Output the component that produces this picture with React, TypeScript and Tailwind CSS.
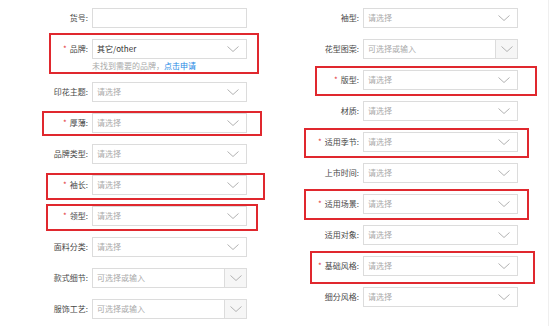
import React from 'react'

type FieldProps = {
  label: string
  required?: boolean
  placeholder?: string
  value?: string
  combo?: boolean
  empty?: boolean
  hint?: boolean
}

const Chevron = () => (
  <svg width="12" height="7" viewBox="0 0 12 7" fill="none">
    <polyline points="0.5,0.5 6,5.5 11.5,0.5" stroke="#b3b3b3" strokeWidth="1" />
  </svg>
)

const Field = ({ label, required, placeholder = '请选择', value, combo, empty, hint }: FieldProps) => {
  return (
    <div className="mb-[11px]">
      <div className="flex items-center">
        <div className="w-[88px] shrink-0 text-right text-[8px] leading-[20px] text-[#484848] whitespace-nowrap">
          {required && <span className="text-[#e4393c] mr-[3px]">*</span>}
          {label}:
        </div>
        <div className="ml-[4px] flex h-[20px] w-[155px] items-center border border-[#dcdcdc] bg-white">
          {empty ? null : (
            <>
              <span
                className={`flex-1 pl-[4px] text-[8px] leading-[18px] ${value ? 'text-[#333]' : 'text-[#aaa]'}`}
              >
                {value ?? placeholder}
              </span>
              {combo ? (
                <span className="flex h-full w-[22px] items-center justify-center border-l border-[#dcdcdc] bg-[#f6f6f6]">
                  <Chevron />
                </span>
              ) : (
                <span className="flex items-center pr-[7px]">
                  <Chevron />
                </span>
              )}
            </>
          )}
        </div>
      </div>
      {hint && (
        <div className="ml-[92px] mt-[2px] text-[8px] leading-[10px] text-[#aaa] whitespace-nowrap">
          未找到需要的品牌，<span className="text-[#1e88e5]">点击申请</span>
        </div>
      )}
    </div>
  )
}

const Mark = ({ className }: { className: string }) => (
  <div className={`pointer-events-none absolute border-2 border-[#e0282e] ${className}`} />
)

export default function App() {
  return (
    <div
      className="relative h-[326px] w-[554px] overflow-hidden bg-white"
      style={{ fontFamily: '"Noto Sans CJK SC", "Noto Sans", sans-serif' }}
    >
      <div className="flex h-full w-[549px] gap-[24px] border-r border-[#efefef]">
        <div className="flex flex-col pt-[8px]">
          <Field label="货号" empty />
          <Field label="品牌" required value="其它/other" hint />
          <Field label="印花主题" />
          <Field label="厚薄" required />
          <Field label="品牌类型" />
          <Field label="袖长" required />
          <Field label="领型" required />
          <Field label="面料分类" />
          <Field label="款式细节" combo placeholder="可选择或输入" />
          <Field label="服饰工艺" combo placeholder="可选择或输入" />
        </div>
        <div className="flex flex-col pt-[8px]">
          <Field label="袖型" />
          <Field label="花型图案" combo placeholder="可选择或输入" />
          <Field label="版型" required />
          <Field label="材质" />
          <Field label="适用季节" required />
          <Field label="上市时间" />
          <Field label="适用场景" required />
          <Field label="适用对象" />
          <Field label="基础风格" required />
          <Field label="细分风格" />
        </div>
      </div>

      <Mark className="left-[49px] top-[33px] h-[41px] w-[210px]" />
      <Mark className="left-[42px] top-[111px] h-[25px] w-[220px]" />
      <Mark className="left-[46px] top-[173px] h-[27px] w-[219px]" />
      <Mark className="left-[46px] top-[204px] h-[27px] w-[212px]" />
      <Mark className="left-[315px] top-[66px] h-[30px] w-[222px]" />
      <Mark className="left-[304px] top-[128px] h-[30px] w-[225px]" />
      <Mark className="left-[304px] top-[189px] h-[31px] w-[225px]" />
      <Mark className="left-[310px] top-[251px] h-[33px] w-[225px]" />
    </div>
  )
}
